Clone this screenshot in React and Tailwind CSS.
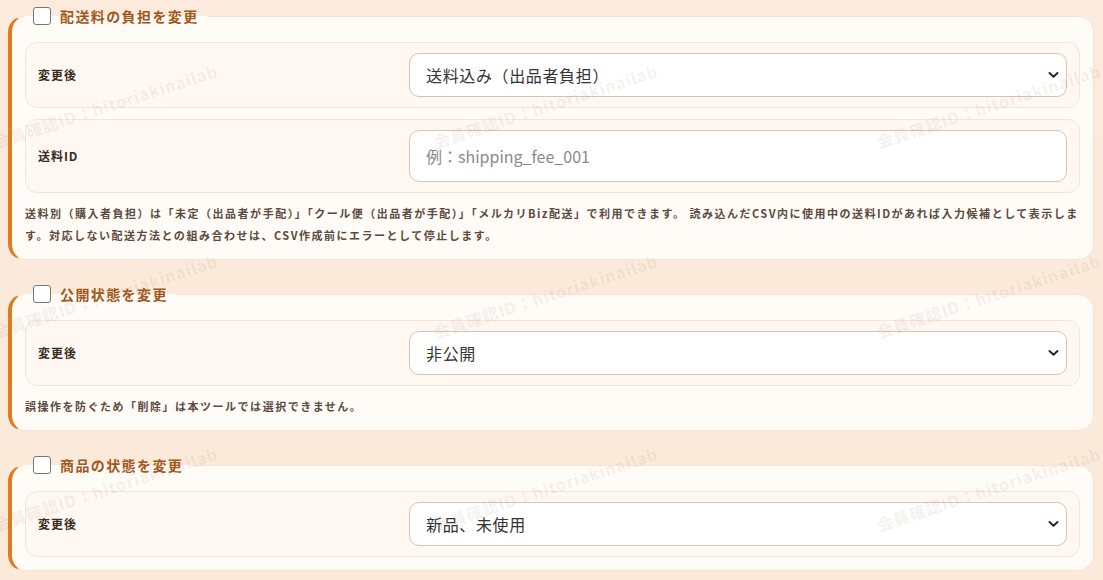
import { useState } from 'react';

const marks = [
  'left-[-6px] top-[130px]',
  'left-[434px] top-[130px]',
  'left-[877px] top-[130px]',
  'left-[-6px] top-[320px]',
  'left-[434px] top-[320px]',
  'left-[877px] top-[320px]',
  'left-[-6px] top-[513px]',
  'left-[434px] top-[513px]',
  'left-[877px] top-[513px]',
];

function Chevron() {
  return (
    <svg className="pointer-events-none absolute right-[8px] top-1/2 -translate-y-1/2" width="11" height="7" viewBox="0 0 11 7" fill="none">
      <path d="M1.5 1.5L5.5 5.2L9.5 1.5" stroke="#2d2520" strokeWidth="2" strokeLinecap="round" strokeLinejoin="round" />
    </svg>
  );
}

function SelectBox({ value, options }) {
  const [v, setV] = useState(value);
  return (
    <div className="relative">
      <select
        value={v}
        onChange={e => setV(e.target.value)}
        className="h-[44px] w-full appearance-none rounded-[10px] border border-[#d6c3b3] bg-white pl-4 pr-8 text-[16px] tracking-[0.04em] text-[#333] outline-none"
      >
        {options.map(o => <option key={o}>{o}</option>)}
      </select>
      <Chevron />
    </div>
  );
}

function Row({ label, children }) {
  return (
    <div className="grid grid-cols-[355px_1fr] items-center gap-4 rounded-xl border border-[#f8e4d2] bg-[#fff8f2] py-[10px] pl-3 pr-[12px]">
      <div className="text-[12px] font-bold tracking-[0.08em] text-[#3a2c22]">{label}</div>
      {children}
    </div>
  );
}

function Card({ title, children, note }) {
  const [checked, setChecked] = useState(false);
  return (
    <fieldset className="min-w-0 rounded-2xl border border-[#f6e3d2] border-l-4 border-l-[#df7b22] bg-[#fffcf8] px-[13px] pb-[13px] pt-4">
      <legend className="flex h-5 items-center gap-[9px] px-2">
        <input
          type="checkbox"
          checked={checked}
          onChange={() => setChecked(!checked)}
          className="h-[18px] w-[18px] appearance-none rounded-[3px] border border-[#777] bg-white"
        />
        <span className="text-[14px] font-bold tracking-[0.1em] text-[#a3581b]">{title}</span>
      </legend>
      <div className="flex flex-col gap-[11px]">{children}</div>
      {note && (
        <p className="mt-[9px] text-[11px] font-bold leading-[22px] tracking-[0.137em] text-[#5c4a3c]">{note}</p>
      )}
    </fieldset>
  );
}

export default function App() {
  const [fee, setFee] = useState('');
  return (
    <div
      className="relative h-screen overflow-hidden bg-gradient-to-b from-[#fcebdc] to-[#fbe9da] pl-2 pr-[9px] pt-[6px]"
      style={{ fontFamily: '"Noto Sans CJK JP", "Noto Sans", "Liberation Sans", sans-serif' }}
    >
      <div className="flex flex-col gap-[24px]">
        <Card
          title="配送料の負担を変更"
          note="送料別（購入者負担）は「未定（出品者が手配）」「クール便（出品者が手配）」「メルカリBiz配送」で利用できます。 読み込んだCSV内に使用中の送料IDがあれば入力候補として表示します。対応しない配送方法との組み合わせは、CSV作成前にエラーとして停止します。"
        >
          <Row label="変更後">
            <SelectBox value="送料込み（出品者負担）" options={['送料込み（出品者負担）', '送料別（購入者負担）']} />
          </Row>
          <Row label="送料ID">
            <input
              value={fee}
              onChange={e => setFee(e.target.value)}
              placeholder="例：shipping_fee_001"
              className="h-[52px] w-full rounded-[10px] border border-[#d6c3b3] bg-white px-4 text-[16px] text-[#333] outline-none placeholder:text-[#8a8a8a]"
            />
          </Row>
        </Card>

        <Card title="公開状態を変更" note="誤操作を防ぐため「削除」は本ツールでは選択できません。">
          <Row label="変更後">
            <SelectBox value="非公開" options={['公開', '非公開']} />
          </Row>
        </Card>

        <Card title="商品の状態を変更">
          <Row label="変更後">
            <SelectBox value="新品、未使用" options={['新品、未使用', '未使用に近い', '目立った傷や汚れなし']} />
          </Row>
        </Card>
      </div>

      {/* watermark */}
      <div className="pointer-events-none absolute inset-0">
        {marks.map(m => (
          <span
            key={m}
            className={'absolute origin-left -rotate-[18deg] whitespace-nowrap text-[16px] font-bold tracking-[0.06em] text-[#8a6a5a]/[0.1] ' + m}
          >
            会員確認ID：hitoriakinailab
          </span>
        ))}
      </div>
    </div>
  );
}
